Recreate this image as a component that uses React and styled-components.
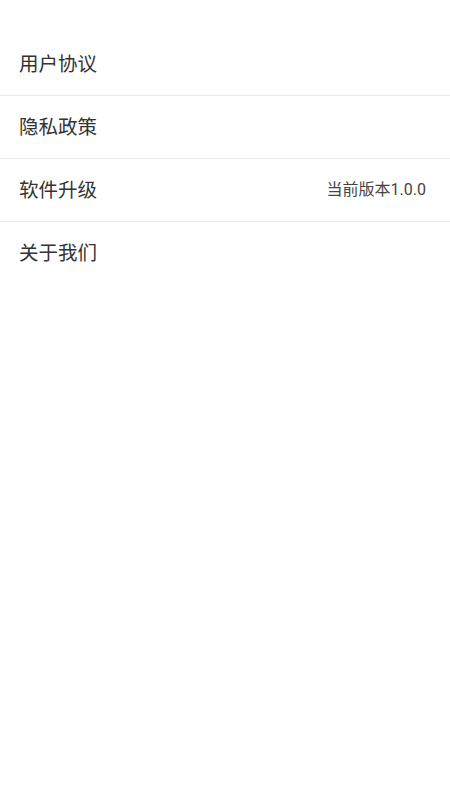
import styled, { createGlobalStyle } from "styled-components";

const GlobalStyle = createGlobalStyle`
  body {
    margin: 0;
    background: #ffffff;
    font-family: "Noto Sans CJK SC", "Noto Sans", sans-serif;
  }
`;

const Page = styled.div`
  width: 450px;
  min-height: 800px;
  background: #ffffff;
  padding-top: 33px;
  box-sizing: border-box;
`;

const List = styled.div`
  display: flex;
  flex-direction: column;
`;

const Row = styled.div`
  display: flex;
  align-items: center;
  justify-content: space-between;
  height: 58px;
  padding: 0 24px 4px 19px;
  border-bottom: ${(p) => (p.last ? "none" : "1px solid #e9e9e9")};
`;

const Label = styled.span`
  font-size: 19.5px;
  color: #333333;
`;

const Extra = styled.span`
  font-family: Roboto, "Noto Sans CJK SC", sans-serif;
  font-size: 16px;
  color: #444444;
`;

const items = [
  { label: "用户协议" },
  { label: "隐私政策" },
  { label: "软件升级", extra: "当前版本1.0.0" },
  { label: "关于我们" },
];

export default function App() {
  return (
    <Page>
      <GlobalStyle />
      <List>
        {items.map((it, i) => (
          <Row key={it.label} last={i === items.length - 1}>
            <Label>{it.label}</Label>
            {it.extra && <Extra>{it.extra}</Extra>}
          </Row>
        ))}
      </List>
    </Page>
  );
}
